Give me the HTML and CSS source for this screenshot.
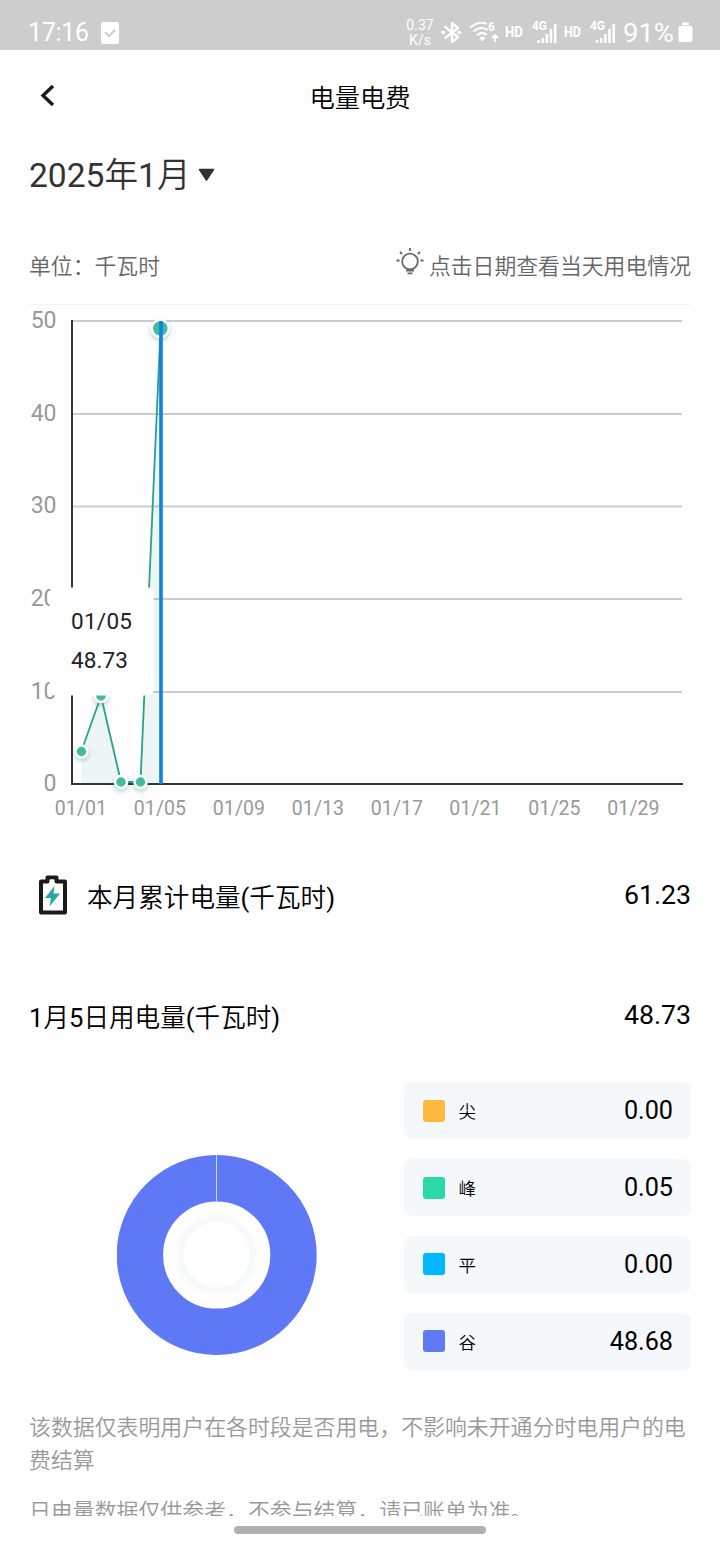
FILE: index.html
```html
<!DOCTYPE html>
<html lang="zh-CN">
<head>
<meta charset="utf-8">
<title>电量电费</title>
<link rel="stylesheet" href="styles.css">
</head>
<body>

<div class="status">
  <span class="clock">17:16</span>
  <svg class="task" width="18" height="22" viewBox="0 0 18 22"><rect width="18" height="22" rx="2" fill="#fff"/><path d="M4 10l4 4 6-6" fill="none" stroke="#cdcdcd" stroke-width="2"/></svg>
  <span class="speed">0.37<br>K/s</span>
  <!-- bluetooth, wifi, sim signals, battery -->
  <svg width="286" height="50" viewBox="434 0 286 50" fill="none" stroke="#fff">
    <path d="M444.500 26.500L458 37l-6 5V23l6 5-13.500 10.500" stroke-width="2.400" stroke-linejoin="round"/>
    <path d="M441.500 32.500h3.500M457.500 32.500h3.500" stroke-width="3"/>
    <path d="M471 27q7-6 15-3.500M474 31q6-5 13-1.500M477.500 35q4.500-4 8.500-.5" stroke-width="2" stroke-linecap="round"/>
    <path d="M480 38q2.500-1.500 5 0l-2.500 3z" fill="#fff" stroke-width="1"/>
    <path d="M495 42v-6M492 38l3-3 3 3" stroke-width="1.800"/>
    <g class="glyph">
      <text x="488" y="31" font-size="12">6</text>
      <text x="505" y="37" font-size="14" textLength="18" lengthAdjust="spacingAndGlyphs">HD</text>
      <text x="532" y="30" font-size="12" textLength="15" lengthAdjust="spacingAndGlyphs">4G</text>
      <text x="564" y="37" font-size="14" textLength="17" lengthAdjust="spacingAndGlyphs">HD</text>
      <text x="590" y="30" font-size="12" textLength="15" lengthAdjust="spacingAndGlyphs">4G</text>
    </g>
    <path id="sig" d="M538.500 43v-3M542.700 43v-5M546.900 43V34M551 43V29M555.200 43V24" stroke-width="2.500"/>
    <use href="#sig" x="58.500"/>
    <text class="percent" x="623" y="41.500" textLength="51" lengthAdjust="spacingAndGlyphs">91%</text>
    <path d="M682 22.500h7v3h1.500q2 0 2 2V40q0 2-2 2h-10q-2 0-2-2V27.500q0-2 2-2h1.500z" fill="#fff" stroke="none"/>
    <path d="M680 25.500h11" stroke="#cdcdcd" stroke-width="1" opacity=".6"/>
  </svg>
</div>

<div class="nav">
  <svg width="20" height="24" viewBox="0 0 20 24"><path d="M15 2L5 11.500 15 21" fill="none" stroke="#1c1c1c" stroke-width="3.400"/></svg>
  <h1>电量电费</h1>
</div>

<div class="page">
  <div class="month">
    <span><b>2025</b>年<b>1</b>月</span>
    <svg width="18" height="14" viewBox="0 0 18 14"><path d="M1.500 1.500h14L8.500 12z" fill="#333" stroke="#333" stroke-width="1.500" stroke-linejoin="round"/></svg>
  </div>

  <div class="unit">
    <span>单位：千瓦时</span>
    <span class="tip">
      <svg width="28" height="28" viewBox="0 0 28 28" fill="none" stroke="#666" stroke-width="1.800">
        <circle cx="14" cy="14.500" r="7.800"/>
        <path d="M14 1v3M4 5l2 2M24 5l-2 2M.5 13.500h3M24.500 13.500h3M10 23.500h8M11.500 26.300h5"/>
      </svg>
      点击日期查看当天用电情况
    </span>
  </div>

  <div class="chart">
    <svg width="720" height="520" viewBox="0 305 720 520">
      <defs>
        <linearGradient id="dot" x1="0" y1="0" x2="0" y2="1"><stop offset="0" stop-color="#3cbd9a"/><stop offset="1" stop-color="#4ab9a0"/></linearGradient>
        <filter id="shade" x="-60%" y="-60%" width="220%" height="240%"><feDropShadow dx="0" dy="2" stdDeviation="2" flood-color="#2a9085" flood-opacity=".4"/></filter>
      </defs>
      <path d="M72 321h610M72 414h610M72 506.500h610M72 599h610M72 692h610" stroke="#ccc" stroke-width="2"/>
      <g class="ylabels">
        <text x="56.500" y="328">50</text>
        <text x="56.500" y="420.500">40</text>
        <text x="56.500" y="513">30</text>
        <text x="56.500" y="606">20</text>
        <text x="56.500" y="698.500">10</text>
        <text x="56.500" y="791">0</text>
      </g>
      <path d="M72 320v464h611" fill="none" stroke="#333" stroke-width="2"/>
      <path d="M81.500 751L101 696l20 86h19.500L160.500 329v455h-79z" fill="#299c8d" opacity=".08"/>
      <path d="M81.500 751L101 696l20 86h19.500L160.500 329" fill="none" stroke="#2ba08c" stroke-width="1.800"/>
      <g fill="url(#dot)" stroke="#fff" stroke-width="2.500" filter="url(#shade)">
        <circle cx="81.500" cy="751.500" r="6"/>
        <circle cx="101" cy="696" r="6"/>
        <circle cx="121" cy="782" r="6"/>
        <circle cx="140.500" cy="782" r="6"/>
        <circle cx="160.300" cy="328.500" r="8.500"/>
      </g>
      <path d="M161 321v463" stroke="#1280dc" stroke-width="3.600"/>
      <rect x="49.500" y="587.500" width="104" height="108" rx="5" fill="#fff"/>
      <g class="tooltip">
        <text x="71" y="629" textLength="61">01/05</text>
        <text x="71" y="668" textLength="57">48.73</text>
      </g>
      <g class="xlabels">
        <text x="81" y="814.500">01/01</text>
        <text x="160" y="814.500">01/05</text>
        <text x="239" y="814.500">01/09</text>
        <text x="318" y="814.500">01/13</text>
        <text x="397" y="814.500">01/17</text>
        <text x="475.500" y="814.500">01/21</text>
        <text x="554.500" y="814.500">01/25</text>
        <text x="633.500" y="814.500">01/29</text>
      </g>
    </svg>
  </div>

  <div class="row total">
    <svg width="30" height="42" viewBox="0 0 30 42">
      <path d="M3 7.500h6.500V3.500h9v4H27v31H3z" fill="none" stroke="#1b1b1b" stroke-width="4" stroke-linejoin="round"/>
      <path d="M12.500 5.500h3.500v4h-3.500z" fill="#fff"/>
      <path d="M16.500 12L7 24h6L11.500 32.500l10.500-13h-6.500z" fill="#2ba6a0"/>
    </svg>
    <span>本月累计电量<b>(</b>千瓦时<b>)</b></span>
    <b class="num">61.23</b>
  </div>
  <div class="row day">
    <span><b>1</b>月<b>5</b>日用电量<b>(</b>千瓦时<b>)</b></span>
    <b class="num">48.73</b>
  </div>

  <div class="split">
    <svg width="200" height="200" viewBox="0 0 200 200">
      <defs><filter id="soft"><feGaussianBlur stdDeviation="2.500"/></filter></defs>
      <circle cx="99.700" cy="100" r="76.800" fill="none" stroke="#5f79f6" stroke-width="46.400"/>
      <path d="M99.500 0v46" stroke="#c3dcf5" stroke-width="1"/>
      <circle cx="99.700" cy="100" r="36" fill="none" stroke="#f4f6f8" stroke-width="6" filter="url(#soft)"/>
      <circle cx="99.700" cy="100" r="32.500" fill="#fff"/>
    </svg>
    <ul class="legend">
      <li><i class="sharp"></i><span>尖</span><b>0.00</b></li>
      <li><i class="peak"></i><span>峰</span><b>0.05</b></li>
      <li><i class="flat"></i><span>平</span><b>0.00</b></li>
      <li><i class="valley"></i><span>谷</span><b>48.68</b></li>
    </ul>
  </div>

  <div class="notes">
    <p>该数据仅表明用户在各时段是否用电，不影响未开通分时电用户的电费结算</p>
    <p>日电量数据仅供参考，不参与结算，请已账单为准。</p>
  </div>
</div>

<div class="home"></div>

</body>
</html>
```
FILE: styles.css
```css
* {
  box-sizing: border-box;
}

body {
  margin: 0;
  width: 720px;
  height: 1544px;
  overflow: hidden;
  background: #fefefe;
  color: #000;
  font-family: Roboto, "Noto Sans CJK SC", sans-serif;
}

svg {
  display: block;
  flex: none;
}

b {
  font-weight: 400;
}

/* status bar */
.status {
  display: flex;
  height: 50px;
  padding-left: 28px;
  background: #cdcdcd;
  color: #fff;
}

.clock {
  width: 73px;
  padding-top: 15px;
  font-size: 25px;
  line-height: 36px;
  letter-spacing: -.3px;
}

.task {
  margin-top: 22px;
}

.speed {
  width: 32px;
  margin-left: auto;
  margin-right: -2px;
  padding-top: 18px;
  font-size: 14px;
  line-height: 15px;
  text-align: center;
}

.glyph {
  fill: #fff;
  stroke: none;
  font-weight: 700;
}

.percent {
  fill: #fff;
  stroke: none;
  font-size: 26px;
}

/* title bar */
.nav {
  display: flex;
  align-items: center;
  height: 91px;
  padding: 0 38px;
}

.nav h1 {
  flex: 1;
  margin: 0 20px 0 0;
  font-size: 25.3px;
  font-weight: 350;
  text-align: center;
}

.page {
  height: 1375px;
  overflow: hidden;
}

.month {
  display: flex;
  align-items: center;
  gap: 7px;
  height: 62px;
  padding-left: 29px;
  color: #333;
  font-size: 33.6px;
  font-weight: 350;
}

.month svg {
  margin-top: 5px;
}

.unit {
  display: flex;
  justify-content: space-between;
  align-items: center;
  height: 102px;
  margin: 0 29px 0 28px;
  padding: 21px 0 0 1px;
  border-bottom: 1px solid #f3f3f3;
  color: #666;
  font-size: 21.85px;
  font-weight: 350;
}

.tip {
  display: flex;
  align-items: center;
  gap: 5px;
}

.tip svg {
  margin-top: -7px;
}

/* chart */
.chart text {
  font-family: Roboto, sans-serif;
}

.ylabels {
  fill: #999;
  font-size: 23px;
  text-anchor: end;
}

.xlabels {
  fill: #999;
  font-size: 19.5px;
  letter-spacing: .1px;
  text-anchor: middle;
}

.tooltip {
  fill: #222;
  font-size: 22.5px;
}

.row {
  display: flex;
  align-items: center;
  padding: 0 29px;
  font-size: 25.6px;
  font-weight: 350;
}

.num {
  margin-left: auto;
  font-size: 26.7px;
}

.total {
  height: 140px;
  padding-left: 38px;
}

.total svg {
  margin-right: 19px;
}

.day {
  height: 100px;
}

.split {
  display: flex;
  align-items: center;
  justify-content: space-between;
  height: 322px;
  padding: 0 29px 0 117px;
}

.split > svg {
  margin-top: 58px;
}

.legend {
  display: flex;
  flex-direction: column;
  gap: 19.7px;
  width: 287px;
  margin: 0;
  padding: 0;
  list-style: none;
}

.legend li {
  display: flex;
  align-items: center;
  height: 57px;
  padding: 0 18px 0 18.5px;
  border-radius: 8px;
  background: #f4f8fb;
  font-size: 17.5px;
  font-weight: 350;
}

.legend i {
  width: 22px;
  height: 22px;
  margin-right: 14px;
  border-radius: 3px;
}

.legend b {
  margin-left: auto;
  font-size: 25.2px;
}

.sharp { background: #ffb93e; }
.peak { background: #2bd9a6; }
.flat { background: #00b8ff; }
.valley { background: #6079f5; }

.notes {
  padding: 24px 29px 0;
  color: #999;
  font-size: 21.9px;
  font-weight: 350;
  line-height: 33px;
}

.notes p {
  margin: 0 0 18px;
}

/* gesture bar */
.home {
  width: 252px;
  height: 8px;
  margin: 10px auto 0;
  border-radius: 4px;
  background: #b0b0b0;
}
```
